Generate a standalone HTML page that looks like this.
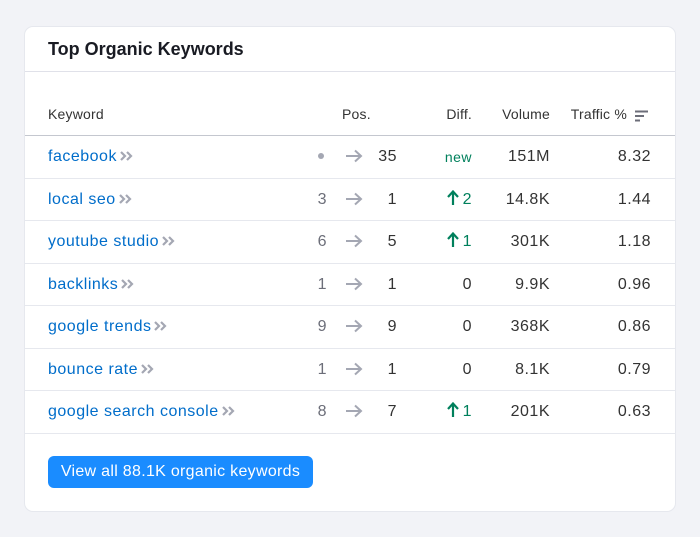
<!DOCTYPE html>
<html><head><meta charset="utf-8"><style>
*{margin:0;padding:0;box-sizing:border-box}
body{width:700px;height:537px;background:#f2f3f7;font-family:"Liberation Sans",Arial,sans-serif;position:relative;overflow:hidden}
.card{position:absolute;left:25px;top:27px;width:650px;height:484px;background:#fff;border-radius:8px;box-shadow:0 0 0 1px #e6e8ee}
.title{position:absolute;left:23px;top:12px;font-size:18px;font-weight:bold;color:#191b23}
.hl{position:absolute;left:0;right:0;top:44px;height:1px;background:#e0e1e9}
.th{position:absolute;top:79px;font-size:14px;color:#333;letter-spacing:0.2px}
.hline{position:absolute;left:0;right:0;top:108px;height:1px;background:#c4c7cf}
.row{position:absolute;left:0;right:0;height:42.5px;border-bottom:1px solid #e6e8ee;font-size:16px;color:#333;letter-spacing:0.5px}
.row span{position:absolute;top:11px;line-height:20px;white-space:nowrap}
.kw{left:23px;color:#006dca}
.kw svg{margin-left:2px;vertical-align:-1px}
.old{right:348px;color:#6c6e79;text-align:right}
.arr{left:320px;top:13px!important}
.new{right:278px;text-align:right}
.diff{right:203px;text-align:right;color:#00805c}
.diff svg{margin-right:4px}
.vol{right:125px;text-align:right}
.tr{right:24px;text-align:right}
.btn{position:absolute;left:23px;top:429px;width:265px;height:32px;background:#1a8cff;border-radius:6px;color:#fff;font-size:16px;text-align:center;line-height:32px;letter-spacing:0.3px}
</style></head><body>
<svg width="0" height="0" style="position:absolute"><defs>
<symbol id="ch" viewBox="0 0 14 12"><path d="M2 2l4 4-4 4M8 2l4 4-4 4" fill="none" stroke="#a4a7b3" stroke-width="2.2"/></symbol>
<symbol id="ar" viewBox="0 0 18 14"><path d="M1 7h15M10 1.5l6 5.5-6 5.5" fill="none" stroke="#a4a7b3" stroke-width="2"/></symbol>
<symbol id="up" viewBox="0 0 12 16"><path d="M6 15V2M1 7l5-5.5 5 5.5" fill="none" stroke="#00805c" stroke-width="2.2"/></symbol>
</defs></svg>
<div class="card">
<div class="title">Top Organic Keywords</div>
<div class="hl"></div>
<div class="th" style="left:23px">Keyword</div>
<div class="th" style="left:317px">Pos.</div>
<div class="th" style="right:203px">Diff.</div>
<div class="th" style="right:125px">Volume</div>
<div class="th" style="right:48px">Traffic %</div>
<svg style="position:absolute;left:609px;top:83px" width="15" height="12"><path d="M1 1.5h13M1 6h9M1 10.5h5" stroke="#6c6e79" stroke-width="2"/></svg>
<div class="hline"></div>
<div style="position:absolute;top:109px;left:0;right:0">
<div class="row" style="top:0"><span class="kw">facebook<svg width="14" height="12"><use href="#ch"/></svg></span><span class="old" style="top:16px;line-height:8px;right:350px"><svg width="8" height="8" style="display:block"><circle cx="4" cy="4" r="3" fill="#a4a7b3"/></svg></span><span class="arr"><svg width="18" height="14"><use href="#ar"/></svg></span><span class="new">35</span><span class="diff" style="font-size:14px">new</span><span class="vol">151M</span><span class="tr">8.32</span></div>
<div class="row" style="top:42.5px"><span class="kw">local seo<svg width="14" height="12"><use href="#ch"/></svg></span><span class="old">3</span><span class="arr"><svg width="18" height="14"><use href="#ar"/></svg></span><span class="new">1</span><span class="diff"><svg width="12" height="16" style="vertical-align:-2px"><use href="#up"/></svg>2</span><span class="vol">14.8K</span><span class="tr">1.44</span></div>
<div class="row" style="top:85px"><span class="kw">youtube studio<svg width="14" height="12"><use href="#ch"/></svg></span><span class="old">6</span><span class="arr"><svg width="18" height="14"><use href="#ar"/></svg></span><span class="new">5</span><span class="diff"><svg width="12" height="16" style="vertical-align:-2px"><use href="#up"/></svg>1</span><span class="vol">301K</span><span class="tr">1.18</span></div>
<div class="row" style="top:127.5px"><span class="kw">backlinks<svg width="14" height="12"><use href="#ch"/></svg></span><span class="old">1</span><span class="arr"><svg width="18" height="14"><use href="#ar"/></svg></span><span class="new">1</span><span class="diff" style="color:#333">0</span><span class="vol">9.9K</span><span class="tr">0.96</span></div>
<div class="row" style="top:170px"><span class="kw">google trends<svg width="14" height="12"><use href="#ch"/></svg></span><span class="old">9</span><span class="arr"><svg width="18" height="14"><use href="#ar"/></svg></span><span class="new">9</span><span class="diff" style="color:#333">0</span><span class="vol">368K</span><span class="tr">0.86</span></div>
<div class="row" style="top:212.5px"><span class="kw">bounce rate<svg width="14" height="12"><use href="#ch"/></svg></span><span class="old">1</span><span class="arr"><svg width="18" height="14"><use href="#ar"/></svg></span><span class="new">1</span><span class="diff" style="color:#333">0</span><span class="vol">8.1K</span><span class="tr">0.79</span></div>
<div class="row" style="top:255px"><span class="kw">google search console<svg width="14" height="12"><use href="#ch"/></svg></span><span class="old">8</span><span class="arr"><svg width="18" height="14"><use href="#ar"/></svg></span><span class="new">7</span><span class="diff"><svg width="12" height="16" style="vertical-align:-2px"><use href="#up"/></svg>1</span><span class="vol">201K</span><span class="tr">0.63</span></div>
</div>
<div class="btn">View all 88.1K organic keywords</div>
</div>
</body></html>
